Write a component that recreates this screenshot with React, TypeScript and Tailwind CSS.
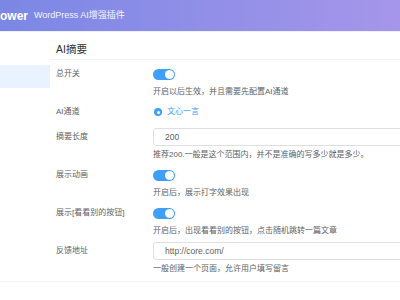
const font = 'font-["Liberation_Sans","Noto_Sans_CJK_SC",sans-serif]';

function Switch() {
  return (
    <div className="relative h-[11px] w-[22px] rounded-full bg-[#409eff]">
      <div className="absolute right-[1px] top-[1px] h-[9px] w-[9px] rounded-full bg-white" />
    </div>
  );
}

function Field({ value }: { value: string }) {
  return (
    <div className="flex h-[18px] w-[260px] shrink-0 items-center rounded-[3px] border border-[#dcdfe6] bg-white pl-[11px] text-[8.5px] text-[#606266]">
      {value}
    </div>
  );
}

function Item({
  label,
  desc,
  gap = 'mb-[2px]',
  children,
}: {
  label: string;
  desc?: string;
  gap?: string;
  children: React.ReactNode;
}) {
  return (
    <div className={gap}>
      <div className="flex h-[20px] items-center">
        <div className="w-[97px] shrink-0 text-[8px] text-[#606266]">{label}</div>
        <div className="flex min-w-0 flex-1 items-center overflow-hidden">{children}</div>
      </div>
      {desc && (
        <div className="h-[16px] whitespace-nowrap pl-[97px] text-[8px] leading-[16px] text-[#606266]">{desc}</div>
      )}
    </div>
  );
}

export default function App() {
  return (
    <div className={`h-[300px] w-[400px] overflow-hidden bg-white ${font}`}>
      {/* Top bar */}
      <header className="flex h-[32px] items-center overflow-hidden border-b border-[#eef0fb] bg-linear-to-r from-[#7b87e5] to-[#a596ea] text-white">
        <span className="ml-[-8px] text-[12px] font-bold">Power</span>
        <span className="ml-[6px] text-[9px] text-white/90">WordPress AI增强插件</span>
      </header>

      <div className="flex h-[250px] border-b border-[#f4f4f4]">
        {/* Side menu */}
        <aside className="w-[50px] shrink-0 pt-[33px]">
          <div className="h-[23px] bg-[#e8f3ff]" />
        </aside>

        {/* Settings */}
        <main className="min-w-0 flex-1 pt-[8px]">
          <div className="ml-0 h-[20px] border-b border-[#f2f2f2] pl-[6px] text-[10.5px] leading-[18px] text-[#303133]">
            AI摘要
          </div>
          <div className="pl-[6px] pt-[4px]">
            <Item label="总开关" desc="开启以后生效，并且需要先配置AI通道">
              <Switch />
            </Item>
            <Item label="AI通道" gap="mb-[5px]">
              <div className="ml-[1px] flex h-[8px] w-[8px] items-center justify-center rounded-full bg-[#409eff]">
                <div className="h-[3px] w-[3px] rounded-full bg-white" />
              </div>
              <span className="ml-[5px] text-[8px] text-[#409eff]">文心一言</span>
            </Item>
            <Item label="摘要长度" desc="推荐200.一般是这个范围内，并不是准确的写多少就是多少。">
              <Field value="200" />
            </Item>
            <Item label="展示动画" desc="开启后，展示打字效果出现">
              <Switch />
            </Item>
            <Item label="展示[看看别的按钮]" desc="开启后，出现看看别的按钮，点击随机跳转一篇文章">
              <Switch />
            </Item>
            <Item label="反馈地址" desc="一般创建一个页面，允许用户填写留言">
              <Field value="http://core.com/" />
            </Item>
          </div>
        </main>
      </div>
    </div>
  );
}
